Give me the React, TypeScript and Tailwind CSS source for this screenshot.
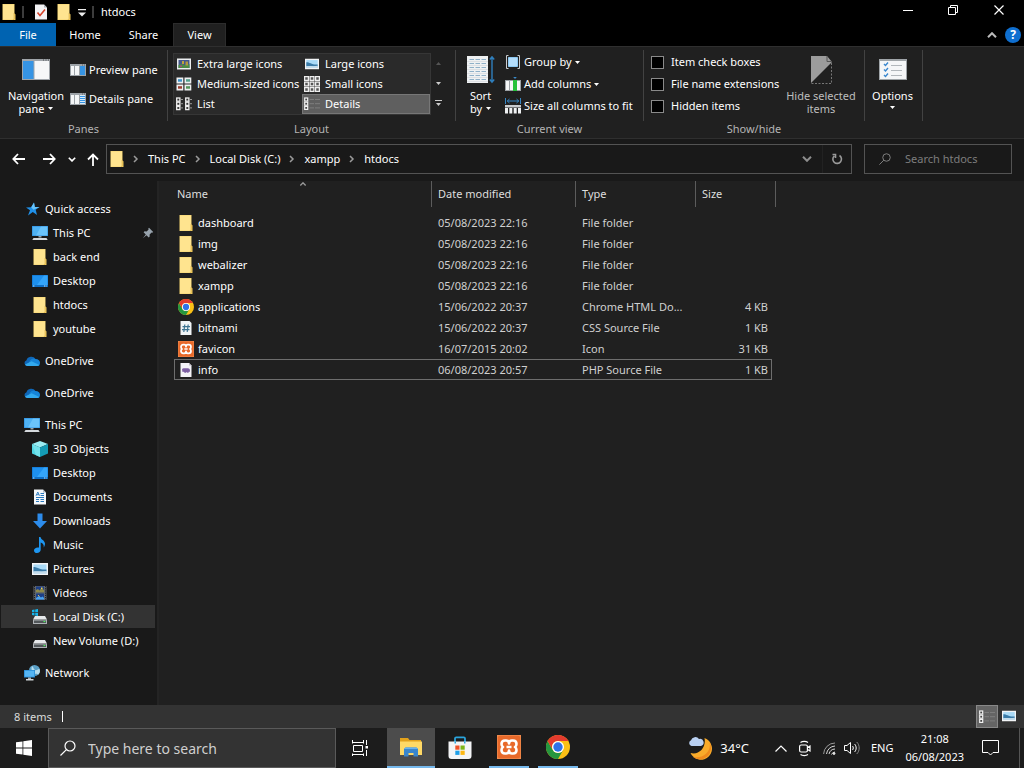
import React from "react";

type IconProps = { className?: string };

function Folder({ className = "h-4 w-[14px]" }: IconProps) {
  return (
    <svg className={className} viewBox="0 0 14 16" aria-hidden="true">
      <path d="M.500 0H12.500v16H.500z" fill="#f5d470" />
      <path d="M1 .500H12v15H1z" fill="#ffe48f" />
      <path d="M12 9.500l1.500.800V16H11l1-1.500z" fill="#f0c95c" />
      <path d="M12 9v5.500L11 16" fill="none" stroke="#d9b04a" strokeWidth=".6" />
    </svg>
  );
}

function Monitor() {
  return (
    <svg className="h-4 w-4" viewBox="0 0 16 16" aria-hidden="true">
      <path d="M0 1h16v10H0z" fill="#2f8fdc" />
      <path d="M.600 1.600h14.800v8.800H.600z" fill="#4fb2f4" />
      <path d="M9 1.600h6.400v8.800H4z" fill="#7fd0ff" opacity=".6" />
      <path d="M6.500 11h3v1.500h-3z" fill="#9aa4ad" />
      <path d="M1.500 13h13l1.200 2H.300z" fill="#d5d9dd" />
    </svg>
  );
}

function DesktopIcon() {
  return (
    <svg className="h-4 w-4" viewBox="0 0 16 16" aria-hidden="true">
      <path d="M0 2h16v12H0z" fill="#0f6fc6" />
      <path d="M.5 2.500h15v9.500H.5z" fill="#1e90ee" />
      <path d="M12 2.500h3.500V12H5z" fill="#34a5fa" />
      <path d="M1 13h2M12 13h3" stroke="#bfe3ff" strokeWidth="1" strokeDasharray="1 .6" />
    </svg>
  );
}

function Star() {
  return (
    <svg className="h-4 w-4" viewBox="0 0 16 16" aria-hidden="true">
      <path d="M10 1.500l.800 4.600 4.700-.2-3.800 2.900 1.300 5.200-4.200-3-4.800 3.500 2-5.200L2 6.400l5.200-.1z" fill="#2090e8" />
      <path d="M10 1.500l.800 4.600 4.700-.2-6 2.800-2.300-2.400z" fill="#66c3fb" />
    </svg>
  );
}

function Cloud() {
  return (
    <svg className="h-4 w-4" viewBox="0 0 16 16" aria-hidden="true">
      <path d="M3 13a3 3 0 01-.5-5.800A5 5 0 0111.500 6 3.700 3.700 0 0113 13z" fill="#0f67b8" />
      <path d="M6 7.500a5 5 0 016-1.300A3.600 3.600 0 0116 10a3 3 0 01-3 3H3.500z" fill="#1583d7" />
      <path d="M1 11.500L7.500 8.200 15.500 12a3 3 0 01-2.500 1H3a3 3 0 01-2-1.500z" fill="#32a9ee" />
    </svg>
  );
}

function Cube() {
  return (
    <svg className="h-4 w-4" viewBox="0 0 16 16" aria-hidden="true">
      <path d="M8 0l8 3-8 3.500L0 3z" fill="#9beef4" />
      <path d="M0 3l8 3.500V16l-8-3.500z" fill="#4fd6e3" />
      <path d="M16 3L8 6.500V16l8-3.500z" fill="#149bb5" />
      <path d="M0 3l8 3.500V16l-4-1.700z" fill="#8beaf0" opacity=".6" />
    </svg>
  );
}

function Doc() {
  return (
    <svg className="h-4 w-4" viewBox="0 0 16 16" aria-hidden="true">
      <path d="M2 .5h9l3 3v12H2z" fill="#f4f7fa" />
      <path d="M11 .5v3h3z" fill="#aebac5" />
      <path d="M8.500 4.500h3.500M8.500 6.500h3.500M4 8.500h8M4 10.500h3M8.500 10.500h3.500M4 12.500h3M8.500 12.500h3.500" stroke="#2878bd" />
      <path d="M4 6.800L5.800 3l1.700 3.800M4.700 5.700h2.200" stroke="#2878bd" fill="none" strokeWidth=".9" />
    </svg>
  );
}

function DownArrow() {
  return (
    <svg className="h-4 w-4" viewBox="0 0 16 16" aria-hidden="true">
      <path d="M5.500.5h5V8H15l-7 7.500L1 8h4.500z" fill="#2d8ceb" />
    </svg>
  );
}

function Note() {
  return (
    <svg className="h-4 w-4" viewBox="0 0 16 16" aria-hidden="true">
      <path d="M7 0h1.500c.2 2.500 4.500 3.500 4.500 6.800 0 1.500-.6 2.700-1.300 3.700.4-2.600-.5-4-3-5V12.500C8.700 14.600 7 16 5 16s-3-1.200-3-2.600C2 11.500 4 10 7 10.500z" fill="#1e96f0" />
    </svg>
  );
}

function Picture({ className = "h-4 w-4" }: IconProps) {
  return (
    <svg className={className} viewBox="0 0 16 16" aria-hidden="true">
      <path d="M0 2h16v12H0z" fill="#f2f4f6" />
      <path d="M1.500 3.500h13v9h-13z" fill="#a9daf7" />
      <path d="M1.500 6c4 0 6 3 13 2.500v2h-13z" fill="#3a7ba8" />
      <path d="M1.500 10.500c5-.5 8 .500 13-.5v2.500h-13z" fill="#c4dceb" />
    </svg>
  );
}

function Film() {
  return (
    <svg className="h-4 w-4" viewBox="0 0 16 16" aria-hidden="true">
      <path d="M1.500 1h13v14h-13z" fill="#63676c" />
      <path d="M2.500 1v14M13.500 1v14" stroke="#1b1d20" strokeDasharray="1.200 1" />
      <path d="M4 1.500h8v6H4zM4 8.500h8v6H4z" fill="#1d3f86" />
      <path d="M4 5l2-1 1.500 1.500 2-2.500 2.500 2v2.500H4z" fill="#8f8a4a" />
      <path d="M9 2.500h1.500V4H9z" fill="#f2d04c" />
      <path d="M4 13l3-2 2 1.500 1.500-1L12 13v1.500H4z" fill="#49a2ef" />
      <path d="M6 10l1.500 1.500" stroke="#e4b63f" />
    </svg>
  );
}

function Drive({ win = false }: { win?: boolean }) {
  return (
    <svg className="h-4 w-4" viewBox="0 0 16 16" aria-hidden="true">
      <path d="M3 7h10l2 3.500H1z" fill="#e6e8ea" />
      <path d="M1 10.500h14V15H1z" fill="#aeb2b5" />
      <path d="M2 11.500h12V14H2z" fill="#515659" />
      <path d="M11.500 12.500h1.800" stroke="#4bee5a" strokeWidth="1.200" />
      {win && <path d="M0 1l2.500-.4v2.600H0zM3.200.5L6 0v3.200H3.200zM0 3.900h2.500v2.500L0 6zM3.200 3.900H6V7l-2.800-.5z" fill="#16b5ec" />}
    </svg>
  );
}

function NetworkIcon() {
  return (
    <svg className="h-4 w-4" viewBox="0 0 16 16" aria-hidden="true">
      <circle cx="10.500" cy="5.500" r="5.500" fill="#5a9fc6" />
      <path d="M8 1c2 1 1 3 3 4s2-1 4.500-1c.8 2 .5 4-1 5.500-2-1-3 0-5-2S7 4 8 1z" fill="#b5dced" />
      <path d="M0 5h11v7.500H0z" fill="#2489d4" />
      <path d="M.700 5.700h9.600v6H.700z" fill="#55b6f5" />
      <path d="M4 12.500h3v1.500H4z" fill="#a5b0b8" />
      <path d="M2 14h7.500v1.500H2z" fill="#d3d8db" />
    </svg>
  );
}

function Chrome({ className = "h-4 w-4" }: IconProps) {
  return (
    <svg className={className} viewBox="0 0 48 48" aria-hidden="true">
      <circle cx="24" cy="24" r="24" fill="#fbc016" />
      <path d="M3.200 12A24 24 0 0024 48l10.400-18a12 12 0 01-20.800 0z" fill="#26963f" />
      <path d="M3.200 12a24 24 0 0141.600 0H24a12 12 0 00-10.400 18z" fill="#e33b2e" />
      <circle cx="24" cy="24" r="12" fill="#fff" />
      <circle cx="24" cy="24" r="9.400" fill="#2f72e8" />
    </svg>
  );
}

function Xampp({ className = "h-4 w-4" }: IconProps) {
  return (
    <svg className={className} viewBox="0 0 24 24" aria-hidden="true">
      <path d="M0 0h24v24H0z" fill="#f08a4c" />
      <rect x=".8" y=".8" width="22.400" height="22.400" rx="2" fill="#e8692a" />
      <path
        d="M8 5.500h1.200q2.800 0 2.800 3q0-3 2.800-3H16q3.500 0 3.500 3.500q0 2-1.500 3q1.500 1 1.500 3q0 3.500-3.500 3.500h-1.200q-2.800 0-2.800-3q0 3-2.800 3H8q-3.500 0-3.500-3.500q0-2 1.500-3q-1.500-1-1.500-3q0-3.500 3.500-3.500zM9.500 12h5"
        fill="none"
        stroke="#fff"
        strokeWidth="2.600"
        strokeLinejoin="round"
      />
    </svg>
  );
}

function CssFile() {
  return (
    <svg className="h-4 w-4" viewBox="0 0 16 16" aria-hidden="true">
      <path d="M2.500 1h9l2 2v12h-11z" fill="#f1f4f6" />
      <path d="M6.800 4.500l-1 7.500M10.200 4.500l-1 7.500M4.500 6.700h7.500M4 9.700h7.500" stroke="#3d7391" strokeWidth="1.200" />
    </svg>
  );
}

function PhpFile() {
  return (
    <svg className="h-4 w-4" viewBox="0 0 16 16" aria-hidden="true">
      <path d="M2.500 1h8.500l2.500 2.500V15h-11z" fill="#f4f3f7" />
      <path d="M11 1v2.500h2.500z" fill="#bdbac6" />
      <path d="M4 7.200q.5-1 2-.9h4q1.600 0 1.900 1.500l.1 2h-1.200l-.3 1H9.300l-.5-.9-.9.900H6.500L6 9.700l-1.500.2z" fill="#7d5fa3" />
    </svg>
  );
}

function Pin() {
  return (
    <svg className="h-3 w-3" viewBox="0 0 12 12" aria-hidden="true">
      <path d="M7 .8l4.200 4.200-1 .7-.6-.2-2 2 .1 2-1 .9L4.500 8.200.8 11.200l3-3.700L1.600 5.200l1-1 2 .2 2-2-.3-.9z" fill="#98a3ad" />
    </svg>
  );
}

function Caret({ className = "text-white" }: IconProps) {
  return (
    <svg className={`h-[3px] w-[5px] shrink-0 ${className}`} viewBox="0 0 5 3" aria-hidden="true">
      <path d="M0 0h5L2.500 3z" fill="currentColor" />
    </svg>
  );
}

function Chevron({ className }: IconProps) {
  return (
    <svg className={className} viewBox="0 0 10 6" fill="none" stroke="currentColor" strokeWidth="2" aria-hidden="true">
      <path d="M1 .8l4 4 4-4" />
    </svg>
  );
}

function Magnifier({ className }: IconProps) {
  return (
    <svg className={className} viewBox="0 0 16 16" fill="none" stroke="currentColor" strokeWidth="1.200" aria-hidden="true">
      <circle cx="10" cy="6" r="5" />
      <path d="M6.400 9.600L.5 15.500" />
    </svg>
  );
}

function NavPaneIcon() {
  return (
    <svg className="h-[21px] w-7" viewBox="0 0 28 21" aria-hidden="true">
      <path d="M0 0h28v21H0z" fill="#a0a5aa" />
      <path d="M1 2h10.500v18H1z" fill="#3694e4" />
      <path d="M12.500 2H27v18H12.500z" fill="#f6f7f8" />
      <path d="M21 1h1M23.500 1h1M26 1h1" stroke="#333" strokeWidth=".8" />
    </svg>
  );
}

function SidePaneIcon({ lines = false }: { lines?: boolean }) {
  return (
    <svg className="h-3 w-4" viewBox="0 0 16 12" aria-hidden="true">
      <path d="M0 0h16v12H0z" fill="#9da3a8" />
      <path d="M1 2h3v9H1zM5 2h4v9H5z" fill="#f4f6f7" />
      <path d="M10 2h5v9h-5z" fill={lines ? "#d9ecfb" : "#3694e4"} />
      {lines && <path d="M10 3.500h5M10 5.500h5M10 7.500h5M10 9.500h5" stroke="#3694e4" />}
      <path d="M12 1h1M14 1h1" stroke="#333" strokeWidth=".6" />
    </svg>
  );
}

function XlIcon() {
  return (
    <svg className="h-4 w-4" viewBox="0 0 16 16" aria-hidden="true">
      <path d="M1 2.500h14v11H1z" fill="#eceef0" />
      <path d="M2.500 4h11v8h-11z" fill="#46588c" />
      <path d="M2.500 9l3-1 3 1 5-1v4h-11z" fill="#4d8b45" />
      <path d="M6 5h2v3H6z" fill="#c0a43c" />
      <path d="M9.500 5.500h2.500v4H9.500z" fill="#b3983c" />
      <path d="M4 9.500h2v1.500H4z" fill="#a44d80" />
    </svg>
  );
}

function MediumIcon() {
  return (
    <svg className="h-4 w-4" viewBox="0 0 16 16" aria-hidden="true">
      <path d="M.500 1.500h6.800v6H.500zM8.500 1.500h6.800v6H8.500zM.500 8.500h6.800v6H.500zM8.500 8.500h6.800v6H8.500z" fill="#eef0f1" />
      <path d="M2 3.200h4v2.500H2z" fill="#3d93c9" />
      <path d="M10 3.200h4v2.500h-4z" fill="#54a18c" />
      <path d="M2 10.200h4v2.500H2z" fill="#9b3d2f" />
      <path d="M10 10.200h4v2.500h-4z" fill="#54945a" />
    </svg>
  );
}

function SmallIcon() {
  return (
    <svg className="h-4 w-4" viewBox="0 0 16 16" aria-hidden="true">
      {[0, 5.5, 11].map((y) =>
        [0, 5.5, 11].map((x) => (
          <rect key={`${x}-${y}`} x={x + 0.6} y={y + 0.6} width="3.800" height="3.800" fill="#555" stroke="#eee" strokeWidth="1.300" />
        ))
      )}
    </svg>
  );
}

function ListIcon() {
  return (
    <svg className="h-4 w-4" viewBox="0 0 16 16" aria-hidden="true">
      {[1.5, 5.7, 9.9].map((y) => (
        <g key={y}>
          <rect x=".7" y={y + 0.5} width="3.200" height="3.200" fill="#333" stroke="#eee" strokeWidth="1.300" />
          <rect x="9.700" y={y + 0.5} width="3.200" height="3.200" fill="#333" stroke="#eee" strokeWidth="1.300" />
          <path d={`M5 ${y + 2}h2M14 ${y + 2}h2`} stroke="#999" />
        </g>
      ))}
    </svg>
  );
}

function DetailsIcon() {
  return (
    <svg className="h-4 w-4" viewBox="0 0 16 16" aria-hidden="true">
      {[1.5, 5.7, 9.9].map((y) => (
        <g key={y}>
          <rect x=".7" y={y + 0.5} width="3" height="3" fill="#444" stroke="#f2f2f2" strokeWidth="1.200" />
          <path d={`M5.500 ${y + 2}h4.500M11 ${y + 2}h5`} stroke="#858585" strokeWidth=".8" />
        </g>
      ))}
    </svg>
  );
}

function SortIcon() {
  return (
    <svg className="h-7 w-7" viewBox="0 0 28 28" aria-hidden="true">
      <path d="M0 0h21v27H0z" fill="#eff1f2" />
      {[3, 7, 11, 15, 19, 23].map((y) => (
        <path key={y} d={`M2.500 ${y + 0.5}h4.500M8.500 ${y + 0.5}h4.500M14.500 ${y + 0.5}h4.500`} stroke="#8fb0c8" />
      ))}
      {[5, 9, 13, 17, 21, 25].map((y) => (
        <path key={y} d={`M0 ${y + 0.5}h21`} stroke="#cfd4d8" strokeWidth=".6" />
      ))}
      <path d="M25 1v25M22.800 3.500L25 .8l2.200 2.700M22.800 23.500l2.200 2.700 2.200-2.700" stroke="#2f7fbd" strokeWidth="1.400" fill="none" />
    </svg>
  );
}

function GroupIcon() {
  return (
    <svg className="h-4 w-4" viewBox="0 0 16 16" aria-hidden="true">
      <path d="M3.500 1.500H1.500v13h2M12.500 1.500h2v13h-2" stroke="#c9cccf" fill="none" />
      <path d="M3.500 3.500h9v9h-9z" fill="#b4ddfb" stroke="#8cc8f2" />
    </svg>
  );
}

function AddColIcon() {
  return (
    <svg className="h-4 w-4" viewBox="0 0 16 16" aria-hidden="true">
      <path d="M0 4h16v11H0z" fill="#9da2a6" />
      <path d="M1 5h3v9H1zM5 5h3v9H5zM12 5h3v9h-3z" fill="#f5f6f7" />
      <path d="M8 4h4v11H8z" fill="#27c13a" />
      <path d="M8.200 1h3.600L10 3z" fill="#3a8ccb" />
    </svg>
  );
}

function SizeColIcon() {
  return (
    <svg className="h-4 w-4" viewBox="0 0 16 16" aria-hidden="true">
      <path d="M.5 0v6M15.500 0v6M2 3h12M4.500 1L2.300 3l2.200 2M11.500 1l2.200 2-2.200 2" stroke="#3686c4" fill="none" />
      <path d="M0 7h16v2.500H0z" fill="#c8cbce" />
      <path d="M0 10h3v5.500H0zM4.300 10h3v5.500h-3zM8.700 10h3v5.500h-3zM13 10h3v5.500h-3z" fill="#eff1f2" />
    </svg>
  );
}

function HideIcon() {
  return (
    <svg className="h-7 w-[21px]" viewBox="0 0 21 28" aria-hidden="true">
      <path d="M0 0h16l5 6L0 27z" fill="#9c9c9c" />
      <path d="M16 0v5.500h5" fill="none" stroke="#555" />
      <path d="M20.500 7v20.500H0" fill="none" stroke="#777" strokeDasharray="2 1.500" />
    </svg>
  );
}

function OptionsIcon() {
  return (
    <svg className="h-[21px] w-7" viewBox="0 0 28 21" aria-hidden="true">
      <path d="M0 0h28v21H0z" fill="#9fa4a8" />
      <path d="M1 2h26v18H1z" fill="#f5f6f8" />
      <path d="M5 5l1.500 1.500L9 3.500M5 10.500L6.500 12 9 9M5 16l1.500 1.500L9 14.500" stroke="#3a87cf" strokeWidth="1.400" fill="none" />
      <path d="M12 6.500h11M12 11.500h11M12 16.500h11" stroke="#b2b7bc" />
    </svg>
  );
}

function WindowsLogo() {
  return (
    <svg className="h-4 w-4" viewBox="0 0 16 16" aria-hidden="true">
      <path d="M0 2.300l6.500-.9v6.200H0zM7.300 1.300L16 0v7.600H7.300zM0 8.400h6.500v6.200L0 13.700zM7.300 8.400H16V16l-8.700-1.300z" fill="#fff" />
    </svg>
  );
}

function TaskViewIcon() {
  return (
    <svg className="h-4 w-[17px]" viewBox="0 0 17 16" fill="none" stroke="#fff" aria-hidden="true">
      <path d="M1.500 5.500h9v6h-9zM.5 0v3.500M.5 2.500h11M11.500 0v3.500M.5 16v-2.500M.5 14.500h11M11.500 16v-2.500M14.500 0v5M14.500 10v6" />
      <path d="M13.500 6h2.500v2.500h-2.500z" fill="#fff" stroke="none" />
    </svg>
  );
}

function ExplorerIcon() {
  return (
    <svg className="h-5 w-6" viewBox="0 0 24 20" aria-hidden="true">
      <path d="M1 1h8l1.500 2H22v5H1z" fill="#e2a21c" />
      <path d="M1 4.500h22V18H1z" fill="#ffd966" />
      <path d="M5 19.500V12l1.500-1.500h11L19 12v7.500h-4.500V16h-5v3.500z" fill="#3a86cc" />
      <path d="M5 12l1.500-1.500h11L19 12z" fill="#69b3ee" />
    </svg>
  );
}

function StoreIcon() {
  return (
    <svg className="h-6 w-6" viewBox="0 0 24 24" aria-hidden="true">
      <path d="M7 7V2.500q0-1.200 1.200-1.200h7.600q1.200 0 1.200 1.200V7" fill="none" stroke="#2aa4dc" strokeWidth="1.800" />
      <path d="M.5 5.500h23v14.500a3 3 0 01-3 3h-17a3 3 0 01-3-3z" fill="#f3f4f6" />
      <path d="M6.500 5.500h1.500v2H6.500zM16 5.500h1.500v2H16z" fill="#2aa4dc" />
      <path d="M7.300 9.500h4.200v4.200H7.300z" fill="#ee5128" />
      <path d="M12.500 9.500h4.200v4.200h-4.200z" fill="#7cb518" />
      <path d="M7.300 14.700h4.200v4.200H7.300z" fill="#1e9fe8" />
      <path d="M12.500 14.700h4.200v4.200h-4.200z" fill="#fdb813" />
    </svg>
  );
}

function MoonIcon() {
  return (
    <svg className="h-6 w-6" viewBox="0 0 24 24" aria-hidden="true">
      <path d="M16.500 2a11.200 11.200 0 11-14 15c8 2.500 16-5 14-15z" fill="#f9ab2a" />
      <path d="M21.500 6.500c2 9-6 16.500-16.500 14.500a11.200 11.200 0 0016.500-14.500z" fill="#ef8a1c" />
      <path d="M3.500 10A3 3 0 013 4.300 4.500 4.500 0 0111 3a3.300 3.300 0 012 7z" fill="#b9d0f2" />
    </svg>
  );
}

function CameraIcon() {
  return (
    <svg className="h-[17px] w-3" viewBox="0 0 12 17" fill="none" stroke="#fff" strokeWidth="1.200" aria-hidden="true">
      <rect x=".6" y="5" width="7.800" height="7" rx="1.500" />
      <path d="M8.500 7.500l2.500-1.500v5L8.500 9.500M1.500 2.500c2-1.400 5.500-1.400 7.500 0M1.500 14.500c2 1.400 5.500 1.400 7.500 0" />
    </svg>
  );
}

function WifiIcon() {
  return (
    <svg className="h-[13px] w-[13px]" viewBox="0 0 13 13" fill="none" stroke="#d8d8d8" aria-hidden="true">
      <path d="M.6 12A11.500 11.500 0 0112 1" stroke="#999" />
      <path d="M3.500 12A9 9 0 0112 4M6 12a6.500 6.500 0 016-5M8.500 12.500A4 4 0 0112 10" />
      <circle cx="11" cy="11.500" r="1" fill="#fff" />
    </svg>
  );
}

function SpeakerIcon() {
  return (
    <svg className="h-[14px] w-4" viewBox="0 0 16 14" fill="none" stroke="#fff" aria-hidden="true">
      <path d="M.5 4.500H3L6.500 1.500v11L3 9.500H.5z" />
      <path d="M8.500 5c1 1 1 3 0 4M10.500 3c2.200 2 2.200 6 0 8" />
      <path d="M12.700 1c3.300 3 3.300 9 0 12" stroke="#888" />
    </svg>
  );
}

function NotifyIcon() {
  return (
    <svg className="h-4 w-[17px]" viewBox="0 0 17 16" fill="none" stroke="#fff" aria-hidden="true">
      <path d="M.5.5h16v12H11L8.500 15 6 12.500H.5z" />
    </svg>
  );
}

const ribbonButton = "flex items-center whitespace-nowrap hover:bg-[#333]";

function Group({ label, className, children }: { label: string; className?: string; children: React.ReactNode }) {
  return (
    <section aria-label={label || "Options"} className={`flex shrink-0 ${className ?? ""}`}>
      <div className="flex flex-1 flex-col">
        <div className="flex h-[74px]">{children}</div>
        <div className="text-center text-[#b4b4b4]">{label}</div>
      </div>
      <div className="mt-[3px] h-[71px] w-px bg-[#424242]" />
    </section>
  );
}

const layouts = [
  { name: "Extra large icons", icon: <XlIcon /> },
  { name: "Large icons", icon: <Picture className="h-[14px] w-4" /> },
  { name: "Medium-sized icons", icon: <MediumIcon /> },
  { name: "Small icons", icon: <SmallIcon /> },
  { name: "List", icon: <ListIcon /> },
  { name: "Details", icon: <DetailsIcon /> },
];

type Node = { name: string; icon: React.ReactNode; pinned?: boolean; active?: boolean };

const tree: { root: Node; items: Node[] }[] = [
  {
    root: { name: "Quick access", icon: <Star /> },
    items: [
      { name: "This PC", icon: <Monitor />, pinned: true },
      { name: "back end", icon: <Folder /> },
      { name: "Desktop", icon: <DesktopIcon /> },
      { name: "htdocs", icon: <Folder /> },
      { name: "youtube", icon: <Folder /> },
    ],
  },
  { root: { name: "OneDrive", icon: <Cloud /> }, items: [] },
  { root: { name: "OneDrive", icon: <Cloud /> }, items: [] },
  {
    root: { name: "This PC", icon: <Monitor /> },
    items: [
      { name: "3D Objects", icon: <Cube /> },
      { name: "Desktop", icon: <DesktopIcon /> },
      { name: "Documents", icon: <Doc /> },
      { name: "Downloads", icon: <DownArrow /> },
      { name: "Music", icon: <Note /> },
      { name: "Pictures", icon: <Picture /> },
      { name: "Videos", icon: <Film /> },
      { name: "Local Disk (C:)", icon: <Drive win />, active: true },
      { name: "New Volume (D:)", icon: <Drive /> },
    ],
  },
  { root: { name: "Network", icon: <NetworkIcon /> }, items: [] },
];

const files = [
  { name: "dashboard", icon: <Folder />, date: "05/08/2023 22:16", type: "File folder", size: "" },
  { name: "img", icon: <Folder />, date: "05/08/2023 22:16", type: "File folder", size: "" },
  { name: "webalizer", icon: <Folder />, date: "05/08/2023 22:16", type: "File folder", size: "" },
  { name: "xampp", icon: <Folder />, date: "05/08/2023 22:16", type: "File folder", size: "" },
  { name: "applications", icon: <Chrome />, date: "15/06/2022 20:37", type: "Chrome HTML Do...", size: "4 KB" },
  { name: "bitnami", icon: <CssFile />, date: "15/06/2022 20:37", type: "CSS Source File", size: "1 KB" },
  { name: "favicon", icon: <Xampp />, date: "16/07/2015 20:02", type: "Icon", size: "31 KB" },
  { name: "info", icon: <PhpFile />, date: "06/08/2023 20:57", type: "PHP Source File", size: "1 KB", focused: true },
];

function TreeItem({ node, child }: { node: Node; child?: boolean }) {
  return (
    <li className="h-6 pr-0.5 pl-px">
      <a
        href="#"
        className={`flex h-[23px] items-center gap-[5px] pr-px ${child ? "pl-[31px]" : "pl-[23px]"} ${node.active ? "bg-[#333]" : ""}`}
      >
        <span className="grid w-4 place-items-center">{node.icon}</span>
        <span className="flex-1 whitespace-nowrap">{node.name}</span>
        {node.pinned && <Pin />}
      </a>
    </li>
  );
}

function TitleBar() {
  return (
    <header className="bg-black">
      <div className="flex h-[23px] items-center">
        <span className="pl-0.5"><Folder /></span>
        <span className="ml-[6px] h-3 w-0.5 bg-[#3c3c3c]" />
        <button aria-label="Properties" className="ml-[11px]">
          <svg className="h-4 w-3" viewBox="0 0 12 16" aria-hidden="true">
            <path d="M0 .5h9l3 3v12H0z" fill="#f3f3f5" />
            <path d="M9 .5v3h3z" fill="#adb3ba" />
            <path d="M2.500 8.500l2.500 3 5-6" fill="none" stroke="#d6442c" strokeWidth="1.600" />
          </svg>
        </button>
        <button aria-label="New folder" className="ml-[10px]"><Folder /></button>
        <button aria-label="Customise toolbar" className="ml-[7px] pt-0.5">
          <svg className="h-2 w-2" viewBox="0 0 8 8" aria-hidden="true">
            <path d="M0 0h8v1.300H0zM0 3.500h8L4 7.500z" fill="#eee" />
          </svg>
        </button>
        <span className="mr-[7px] ml-[6px] h-3 w-0.5 bg-[#3c3c3c]" />
        <h1>htdocs</h1>
        <div className="ml-auto flex self-start">
          <button aria-label="Minimise" className="grid h-5 w-11 place-items-center">
            <span className="h-px w-[10px] bg-white" />
          </button>
          <button aria-label="Restore" className="grid h-5 w-[46px] place-items-center">
            <svg className="h-[10px] w-[10px]" viewBox="0 0 10 10" fill="none" stroke="#fff" aria-hidden="true">
              <path d="M.5 2.500h7v7h-7zM2.500 2.500v-2h7v7h-2" />
            </svg>
          </button>
          <button aria-label="Close" className="grid h-5 w-12 place-items-center pr-0.5">
            <svg className="h-[10px] w-[10px]" viewBox="0 0 10 10" fill="none" stroke="#fff" strokeWidth="1.200" aria-hidden="true">
              <path d="M.5.5l9 9M9.500.5l-9 9" />
            </svg>
          </button>
        </div>
      </div>
      <nav className="flex h-[23px] items-stretch" aria-label="Ribbon tabs">
        <button className="w-14 bg-[#0063b1]">File</button>
        <button className="w-[58px]">Home</button>
        <button className="w-[59px]">Share</button>
        <button className="w-[53px] border border-b-0 border-[#2c2c2c] bg-[#202020]">View</button>
        <div className="ml-auto flex items-center gap-2 pr-[3px]">
          <button aria-label="Collapse ribbon"><Chevron className="h-[6px] w-[10px] rotate-180 text-[#bbb]" /></button>
          <button aria-label="Help" className="grid h-4 w-4 place-items-center rounded-full bg-[#0f6fd0] text-[12px] font-bold">?</button>
        </div>
      </nav>
    </header>
  );
}

function Ribbon() {
  return (
    <div className="flex h-[93px] overflow-hidden border-y border-[#2f2f2f] bg-[#202020]">
      <Group label="Panes" className="w-[168px]">
        <button className="flex w-[70px] flex-col items-center pt-3 pl-0.5 leading-[13px]">
          <NavPaneIcon />
          <span className="mt-[9px]">Navigation</span>
          <span className="flex items-center gap-1">pane <Caret /></span>
        </button>
        <div className="flex flex-col pt-[15px]">
          <button className={`${ribbonButton} mb-[13px] h-4 gap-[3px]`}><SidePaneIcon />Preview pane</button>
          <button className={`${ribbonButton} h-4 gap-[3px]`}><SidePaneIcon lines />Details pane</button>
        </div>
      </Group>
      <Group label="Layout" className="w-72">
        <div className="mt-[6px] ml-[5px] grid h-[62px] w-[258px] grid-cols-2 grid-rows-3 border border-[#363636] bg-[#2a2a2a]">
          {layouts.map((l) => (
            <button
              key={l.name}
              className={`flex items-center gap-[5px] whitespace-nowrap ${l.name === "Details" ? "border border-[#777] bg-[#5f5f5f] pl-px" : "pl-0.5"}`}
            >
              <span className="shrink-0">{l.icon}</span>
              {l.name}
            </button>
          ))}
        </div>
        <div className="mt-[6px] grid h-[60px] w-[15px] grid-rows-3">
          <button aria-label="Scroll up" className="grid place-items-center"><Caret className="rotate-180 text-[#555]" /></button>
          <button aria-label="Scroll down" className="grid place-items-center"><Caret className="text-[#ccc]" /></button>
          <button aria-label="More layouts" className="flex flex-col items-center justify-center gap-0.5">
            <span className="h-px w-[7px] bg-[#ccc]" />
            <Caret className="text-[#ccc]" />
          </button>
        </div>
      </Group>
      <Group label="Current view" className="w-[188px]">
        <button className="flex w-[49px] flex-col items-center pt-[9px] leading-[13px]">
          <SortIcon />
          <span className="mt-[5px]">Sort</span>
          <span className="flex items-center gap-1">by <Caret /></span>
        </button>
        <div className="flex flex-col gap-[6px] pt-[7px]">
          <button className={`${ribbonButton} h-4 gap-[3px]`}><GroupIcon />Group by <Caret /></button>
          <button className={`${ribbonButton} h-4 gap-[3px]`}><AddColIcon />Add columns <Caret /></button>
          <button className={`${ribbonButton} h-4 gap-[3px]`}><SizeColIcon />Size all columns to fit</button>
        </div>
      </Group>
      <Group label="Show/hide" className="w-[221px]">
        <div className="flex w-[137px] flex-col gap-[6px] pt-[7px] pl-[7px]">
          {["Item check boxes", "File name extensions", "Hidden items"].map((t) => (
            <label key={t} className="flex h-4 items-center gap-[7px] whitespace-nowrap">
              <input type="checkbox" className="h-[13px] w-[13px] shrink-0 appearance-none border border-[#8a8a8a] bg-black checked:bg-[#0063b1]" />
              {t}
            </label>
          ))}
        </div>
        <button className="flex w-20 flex-col items-center pt-[9px] leading-[13px] text-[#bdbdbd]">
          <HideIcon />
          <span className="mt-[5px] whitespace-nowrap">Hide selected</span>
          <span>items</span>
        </button>
      </Group>
      <Group label="" className="w-[58px]">
        <button className="flex flex-1 flex-col items-center pt-3 pr-0.5 leading-[13px]">
          <OptionsIcon />
          <span className="mt-[9px]">Options</span>
          <Caret className="mt-1" />
        </button>
      </Group>
    </div>
  );
}

function AddressBar() {
  return (
    <div className="flex h-[42px] items-center bg-[#191919] pr-3 pb-0.5">
      <div className="flex w-[106px] shrink-0 items-center pl-3">
        <button aria-label="Back">
          <svg className="h-3 w-[14px]" viewBox="0 0 14 12" fill="none" stroke="#fff" strokeWidth="1.800" aria-hidden="true"><path d="M13 6H1.500M6 1L1.300 6 6 11" /></svg>
        </button>
        <button aria-label="Forward" className="ml-4">
          <svg className="h-3 w-[14px]" viewBox="0 0 14 12" fill="none" stroke="#fff" strokeWidth="1.800" aria-hidden="true"><path d="M1 6h11.500M8 1l4.700 5L8 11" /></svg>
        </button>
        <button aria-label="Recent locations" className="ml-3"><Chevron className="h-[5px] w-2" /></button>
        <button aria-label="Up" className="ml-[11px]">
          <svg className="h-[13px] w-3" viewBox="0 0 12 13" fill="none" stroke="#fff" strokeWidth="1.800" aria-hidden="true"><path d="M6 13V1.500M1 6.500l5-5 5 5" /></svg>
        </button>
      </div>
      <nav aria-label="Address" className="flex h-[30px] flex-1 items-center border border-[#535353] pl-[3px]">
        <Folder />
        {["This PC", "Local Disk (C:)", "xampp", "htdocs"].map((p) => (
          <React.Fragment key={p}>
            <svg className="mr-[9px] ml-2 h-2 w-[7px] shrink-0" viewBox="0 0 7 8" fill="none" stroke="#9a9a9a" strokeWidth="1.500" aria-hidden="true"><path d="M2 1l3 3-3 3" /></svg>
            <a href="#" className="whitespace-nowrap">{p}</a>
          </React.Fragment>
        ))}
        <button aria-label="Previous locations" className="ml-auto grid h-full w-[30px] place-items-center"><Chevron className="h-[6px] w-[10px] text-[#8d8d8d]" /></button>
        <button aria-label="Refresh" className="grid h-full w-[29px] place-items-center border-l border-[#222]">
          <svg className="h-3 w-3" viewBox="0 0 12 12" fill="none" stroke="#9a9a9a" strokeWidth="1.600" aria-hidden="true"><path d="M8.500 2.500A4.300 4.300 0 113.200 3M1.500 1.500h3v3.500" /></svg>
        </button>
      </nav>
      <label htmlFor="folder-search" className="ml-3 flex h-[30px] w-[148px] shrink-0 items-center border border-[#535353] pl-[14px]">
        <Magnifier className="h-3 w-3 shrink-0 text-[#8a8a8a]" />
        <input id="folder-search" type="text" aria-label="Search htdocs" placeholder="Search htdocs" className="ml-[14px] h-full w-full min-w-0 bg-transparent pb-0.5 outline-none placeholder:text-[#7d7d7d]" />
      </label>
    </div>
  );
}

function Sidebar() {
  return (
    <nav aria-label="Navigation pane" className="w-[159px] shrink-0 border-r-2 border-[#242424] bg-[#191919] pt-4">
      <div className="flex flex-col gap-2">
        {tree.map((s, i) => (
          <ul key={i}>
            <TreeItem node={s.root} />
            {s.items.map((n) => (
              <TreeItem key={n.name} node={n} child />
            ))}
          </ul>
        ))}
      </div>
    </nav>
  );
}

function FileList() {
  return (
    <main className="min-w-0 flex-1 bg-[#202020] pl-[15px]">
      <table className="w-[602px] table-fixed border-separate border-spacing-0 text-left">
        <colgroup>
          <col className="w-[258px]" />
          <col className="w-36" />
          <col className="w-[120px]" />
          <col className="w-[76px]" />
          <col className="w-1" />
        </colgroup>
        <thead className="text-[#dedede]">
          <tr className="h-[26px]">
            <th className="relative border-r border-[#5c5c5c] pl-[3px] font-normal" aria-sort="ascending">
              Name
              <Chevron className="absolute top-px left-1/2 h-1 w-2 -translate-x-1/2 rotate-180 text-[#999]" />
            </th>
            <th className="border-r border-[#5c5c5c] pl-[6px] font-normal">Date modified</th>
            <th className="border-r border-[#5c5c5c] pl-[6px] font-normal">Type</th>
            <th className="pl-[6px] font-normal">Size</th>
            <td className="border-r border-[#5c5c5c]" />
          </tr>
        </thead>
        <tbody>
          <tr className="h-[5px]"><td colSpan={5} /></tr>
          {files.map((f) => {
            const edge = f.focused ? "border-y border-[#6e6e6e]" : "border-y border-transparent";
            return (
              <tr key={f.name} className="h-[21px] text-[#d0d0d0]">
                <td className={`${edge} p-0 ${f.focused ? "border-l pl-[3px]" : "pl-1"}`}>
                  <div className="flex items-center gap-1 text-white">
                    <span className="grid w-4 place-items-center">{f.icon}</span>
                    {f.name}
                  </div>
                </td>
                <td className={`${edge} p-0 pl-[6px]`}>{f.date}</td>
                <td className={`${edge} p-0 pl-[6px] whitespace-nowrap`}>{f.type}</td>
                <td className={`${edge} p-0 text-right ${f.focused ? "border-r pr-[3px]" : "pr-1"}`}>{f.size}</td>
                <td className="p-0" />
              </tr>
            );
          })}
        </tbody>
      </table>
    </main>
  );
}

function StatusBar() {
  return (
    <footer className="flex h-[23px] items-center bg-[#333] pr-1 pl-[14px] text-[#dcdcdc]">
      <span>8 items</span>
      <span className="ml-[10px] h-[11px] w-px bg-white" />
      <div className="ml-auto flex h-full">
        <button aria-label="Details view" className="grid w-[22px] place-items-center border border-[#888] bg-[#656565]"><DetailsIcon /></button>
        <button aria-label="Thumbnail view" className="grid w-[22px] place-items-center pb-0.5"><Picture className="h-[14px] w-[14px]" /></button>
      </div>
    </footer>
  );
}

function Taskbar() {
  return (
    <div className="flex h-10 items-stretch bg-[#1c1c1c]">
      <button aria-label="Start" className="grid w-12 place-items-center"><WindowsLogo /></button>
      <label htmlFor="taskbar-search" className="flex w-72 items-center border border-[#5a5a5a] bg-[#333] pl-[11px]">
        <Magnifier className="h-4 w-4 shrink-0" />
        <input id="taskbar-search" type="text" aria-label="Type here to search" placeholder="Type here to search" className="ml-3 h-full w-full min-w-0 bg-transparent text-[14px] outline-none placeholder:text-[#cfcfcf]" />
      </label>
      <button aria-label="Task view" className="grid w-12 place-items-center"><TaskViewIcon /></button>
      <div className="flex gap-px pl-[3px]">
        <button aria-label="File Explorer" className="grid w-12 place-items-center border-b-2 border-[#76b9ed] bg-[#4c4c4c]"><ExplorerIcon /></button>
        <button aria-label="Microsoft Store" className="grid w-12 place-items-center"><StoreIcon /></button>
        <button aria-label="XAMPP" className="mx-1 grid w-10 place-items-center border-b-2 border-[#76b9ed]"><Xampp className="h-6 w-6" /></button>
        <button aria-label="Google Chrome" className="mx-1 grid w-10 place-items-center border-b-2 border-[#76b9ed]"><Chrome className="h-6 w-6" /></button>
      </div>
      <div className="ml-auto flex items-stretch">
        <button className="flex items-center gap-2 pr-[26px] text-[13px]"><MoonIcon />34°C</button>
        <button aria-label="Show hidden icons" className="pr-3">
          <svg className="h-[7px] w-3" viewBox="0 0 12 7" fill="none" stroke="#fff" strokeWidth="1.200" aria-hidden="true"><path d="M.5 6.500L6 1l5.500 5.500" /></svg>
        </button>
        <button aria-label="Camera" className="pr-3"><CameraIcon /></button>
        <button aria-label="Network status" className="pr-2"><WifiIcon /></button>
        <button aria-label="Volume" className="pr-[11px]"><SpeakerIcon /></button>
        <button className="pr-3">ENG</button>
        <button className="text-center leading-[18px]">21:08<br />06/08/2023</button>
        <button aria-label="Notifications" className="pr-5 pl-[18px]"><NotifyIcon /></button>
        <button aria-label="Show desktop" className="w-[5px] border-l border-[#555]" />
      </div>
    </div>
  );
}

export default function App() {
  return (
    <div className="flex min-h-screen flex-col bg-[#202020] font-['Noto_Sans','Open_Sans',sans-serif] text-[11px] leading-4 text-white">
      <TitleBar />
      <Ribbon />
      <AddressBar />
      <div className="flex flex-1">
        <Sidebar />
        <FileList />
      </div>
      <StatusBar />
      <Taskbar />
    </div>
  );
}
